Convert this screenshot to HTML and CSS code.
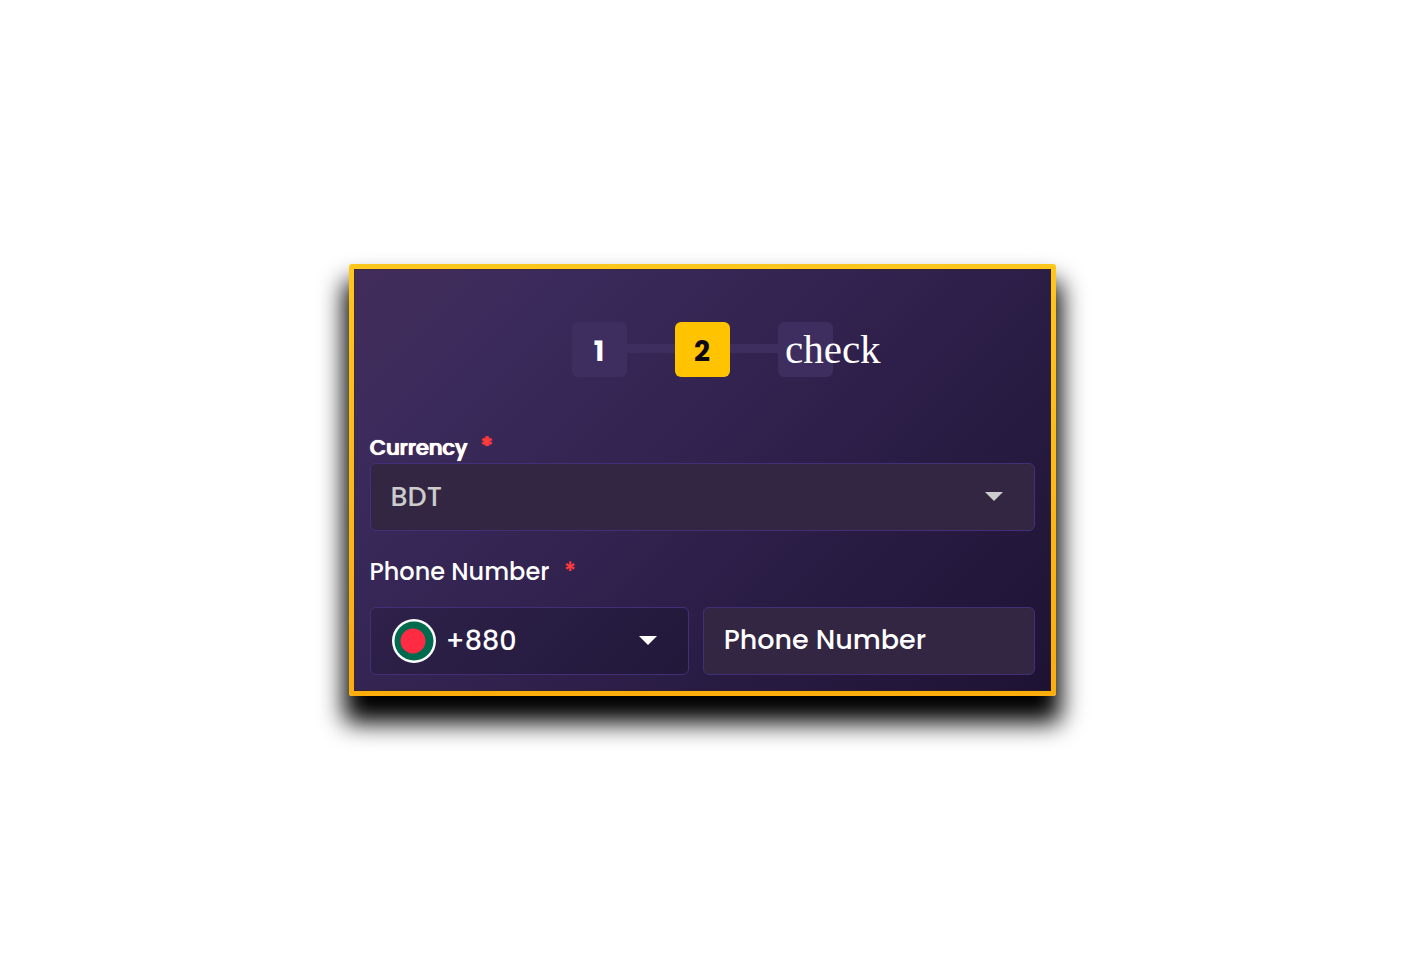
FILE: index.html
```html
<!DOCTYPE html>
<html lang="en">

<head>
    <meta charset="UTF-8">
    <meta name="viewport" content="width=device-width, initial-scale=1.0">
    <title>Registration</title>
    <link rel="stylesheet" href="styles.css">
</head>

<body>
    <form class="card" id="registerForm">
        <ol class="steps">
            <li class="step">1</li>
            <li class="step active">2</li>
            <li class="step"><span class="step-icon">check</span></li>
        </ol>

        <div class="form-group">
            <label class="label-bold" for="currency">Currency <span class="required">*</span></label>
            <div class="field filled disabled">
                <select id="currency" name="currency" disabled>
                    <option value="BDT">BDT</option>
                </select>
                <svg class="caret" viewBox="0 0 18 9" aria-hidden="true">
                    <path d="M0 0h18L9 9z" />
                </svg>
            </div>
        </div>

        <div class="form-group phone-group">
            <label for="phone">Phone Number <span class="required">*</span></label>
            <div class="phone-row">
                <div class="field code">
                    <!-- Bangladesh flag -->
                    <svg class="flag" viewBox="0 0 44 44" aria-hidden="true">
                        <circle cx="22" cy="22" r="22" fill="#fff" />
                        <circle cx="22" cy="22" r="19.500" fill="#006a4e" />
                        <circle cx="21" cy="22" r="12.500" fill="#ff2b42" />
                    </svg>
                    <select id="countryCode" name="countryCode" aria-label="Country code">
                        <option value="+880">+880</option>
                    </select>
                    <svg class="caret" viewBox="0 0 18 9" aria-hidden="true">
                        <path d="M0 0h18L9 9z" />
                    </svg>
                </div>
                <div class="field filled number">
                    <input type="tel" id="phone" name="phone" placeholder="Phone Number">
                </div>
            </div>
        </div>
    </form>
</body>

</html>
```

FILE: styles.css
```css
* {
    box-sizing: border-box;
}

body {
    margin: 0;
    min-height: 100vh;
    padding-bottom: 2px;
    display: flex;
    align-items: center;
    justify-content: center;
    background: #fff;
    color: #fff;
    font-family: Poppins, Inter, sans-serif;
}

.card {
    width: 100%;
    max-width: 707px;
    padding: 53px 16px 16px;
    border: 5px solid transparent;
    border-radius: 3px;
    background:
        linear-gradient(135deg, #422d5b 0%, #3a2a5b 20%, #30214d 50%, #261a40 75%, #1e1234 100%) padding-box,
        linear-gradient(#ffc61c, #fbad0c) border-box;
    box-shadow: 0 22px 24px 5px #000, inset 0 0 0 1px rgba(60, 40, 30, 0.5);
}

.steps {
    display: flex;
    justify-content: center;
    gap: 48px;
    margin: 0 0 56px;
    padding: 0;
    list-style: none;
}

.step {
    position: relative;
    display: flex;
    align-items: center;
    justify-content: center;
    width: 55px;
    height: 55px;
    padding-top: 5px;
    border-radius: 6px;
    background: #3e2e60;
    font-size: 28px;
    font-weight: 700;
}

/* line between two steps */
.step + .step::before {
    content: "";
    position: absolute;
    top: 22px;
    right: 100%;
    width: 48px;
    height: 9px;
    background: #3e2e60;
}

.step.active {
    background: #ffc300;
    color: #0c0814;
}

.step-icon {
    width: 40px;
    margin-bottom: 6px;
    font-family: "Liberation Serif", serif;
    font-size: 41px;
    font-weight: 400;
}

label {
    display: block;
    font-size: 24px;
    font-weight: 500;
    line-height: 30px;
}

.label-bold {
    font-size: 21px;
    text-shadow: 1px 0 0 currentColor, 0 0 1px currentColor;
}

.required {
    margin-left: 8px;
    color: #ff3b3b;
    font-size: 24px;
    font-weight: 600;
    line-height: 1;
}

.phone-group {
    margin-top: 26px;
}

.phone-row {
    display: flex;
    gap: 14px;
    margin-top: 20px;
}

.field {
    display: flex;
    align-items: center;
    height: 68px;
    padding: 0 31px 0 20px;
    border: 1px solid #432f78;
    border-radius: 6px;
    background: linear-gradient(135deg, #2f214a, #21183a);
}

.field.filled {
    background: #322643;
}

.code {
    flex: 0 0 48%;
}

.number {
    flex: 1;
    min-width: 0;
}

select,
input {
    flex: 1;
    min-width: 0;
    height: 100%;
    padding: 0;
    border: 0;
    outline: 0;
    appearance: none;
    background: transparent;
    color: #fff;
    font-family: inherit;
    font-size: 27px;
    font-weight: 500;
}

input {
    padding-bottom: 2px;
}

.disabled select {
    color: #ccc;
    opacity: 1;
}

input::placeholder {
    color: #fff;
    opacity: 1;
}

.flag {
    width: 44px;
    height: 44px;
    margin: 0 10px 0 1px;
}

.caret {
    width: 18px;
    height: 9px;
    fill: #fff;
    pointer-events: none;
}

.disabled .caret {
    fill: #ccc;
}
```
